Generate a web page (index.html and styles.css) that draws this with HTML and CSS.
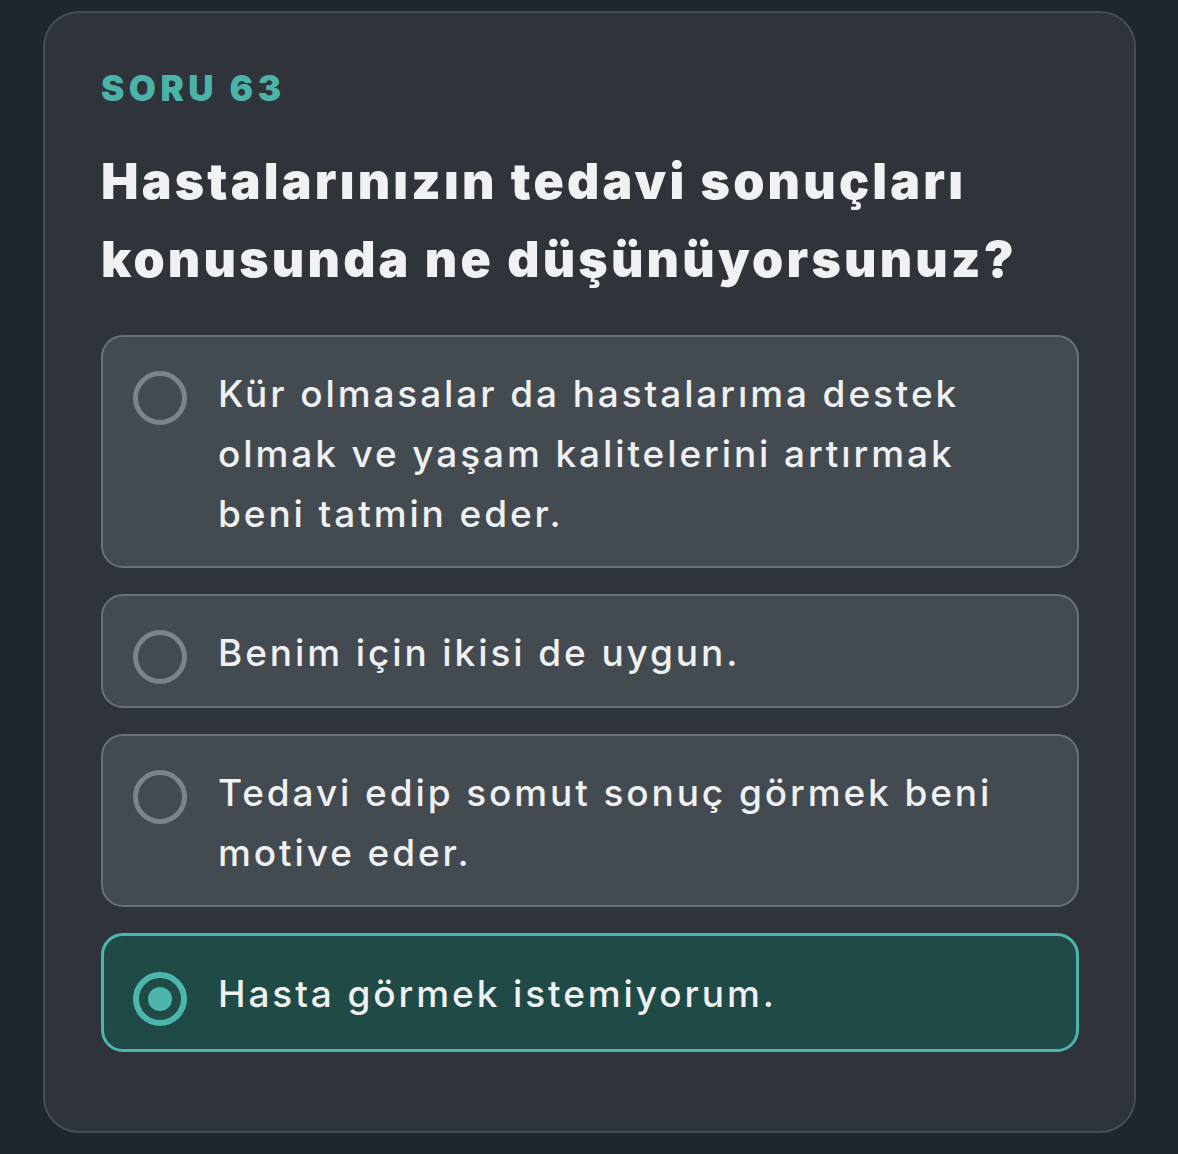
FILE: index.html
```html
<!DOCTYPE html>
<html lang="tr">
<head>
<meta charset="utf-8">
<title>Soru 63</title>
<link rel="stylesheet" href="styles.css">
</head>
<body>
<div class="card">
  <div class="label">SORU 63</div>
  <h1 class="question">Hastalarınızın tedavi sonuçları konusunda ne düşünüyorsunuz?</h1>
  <div class="options">
    <div class="option">
      <span class="radio"></span>
      <span class="text">Kür olmasalar da hastalarıma destek olmak ve yaşam kalitelerini artırmak beni tatmin eder.</span>
    </div>
    <div class="option">
      <span class="radio"></span>
      <span class="text">Benim için ikisi de uygun.</span>
    </div>
    <div class="option">
      <span class="radio"></span>
      <span class="text">Tedavi edip somut sonuç görmek beni motive eder.</span>
    </div>
    <div class="option selected">
      <span class="radio"></span>
      <span class="text">Hasta görmek istemiyorum.</span>
    </div>
  </div>
</div>
</body>
</html>
```
FILE: styles.css
```css
html, body {
  margin: 0;
  padding: 0;
  background: #1f272d;
}
body {
  padding: 11px 42px 23px 43px;
  font-family: Inter, "Noto Sans", "DejaVu Sans", sans-serif;
}
.card {
  background: #2e343a;
  border: 2px solid #474d53;
  border-radius: 36px;
  padding: 54px 55px 79px 56px;
}
.label {
  color: #4bb3a8;
  font-size: 35px;
  font-weight: 900;
  letter-spacing: 4.5px;
  line-height: 42px;
}
.question {
  margin: 33px 0 37px 0;
  color: #f0f1f2;
  font-size: 50px;
  font-weight: 900;
  line-height: 78px;
  letter-spacing: 3.2px;
}
.options {
  display: flex;
  flex-direction: column;
  gap: 26px;
}
.option {
  display: flex;
  align-items: flex-start;
  gap: 31px;
  background: #434a50;
  border: 2px solid #6b7177;
  border-radius: 22px;
  padding: 27px 30px 22px 30px;
}
.radio {
  flex: none;
  width: 54px;
  height: 54px;
  box-sizing: border-box;
  border: 5px solid #7d8389;
  border-radius: 50%;
  margin-top: 7px;
}
.text {
  color: #eef0f2;
  font-size: 37px;
  font-weight: 500;
  line-height: 60px;
  letter-spacing: 2.9px;
}
.option.selected {
  background: #1f4a46;
  border: 3px solid #4db6ac;
  padding: 28px 29px 23px 29px;
}
.option.selected .radio {
  border: 6px solid #4db6ac;
  position: relative;
  margin-top: 8px;
}
.option.selected .radio::after {
  content: "";
  position: absolute;
  left: 9px;
  top: 9px;
  width: 24px;
  height: 24px;
  border-radius: 50%;
  background: #4db6ac;
}
```
